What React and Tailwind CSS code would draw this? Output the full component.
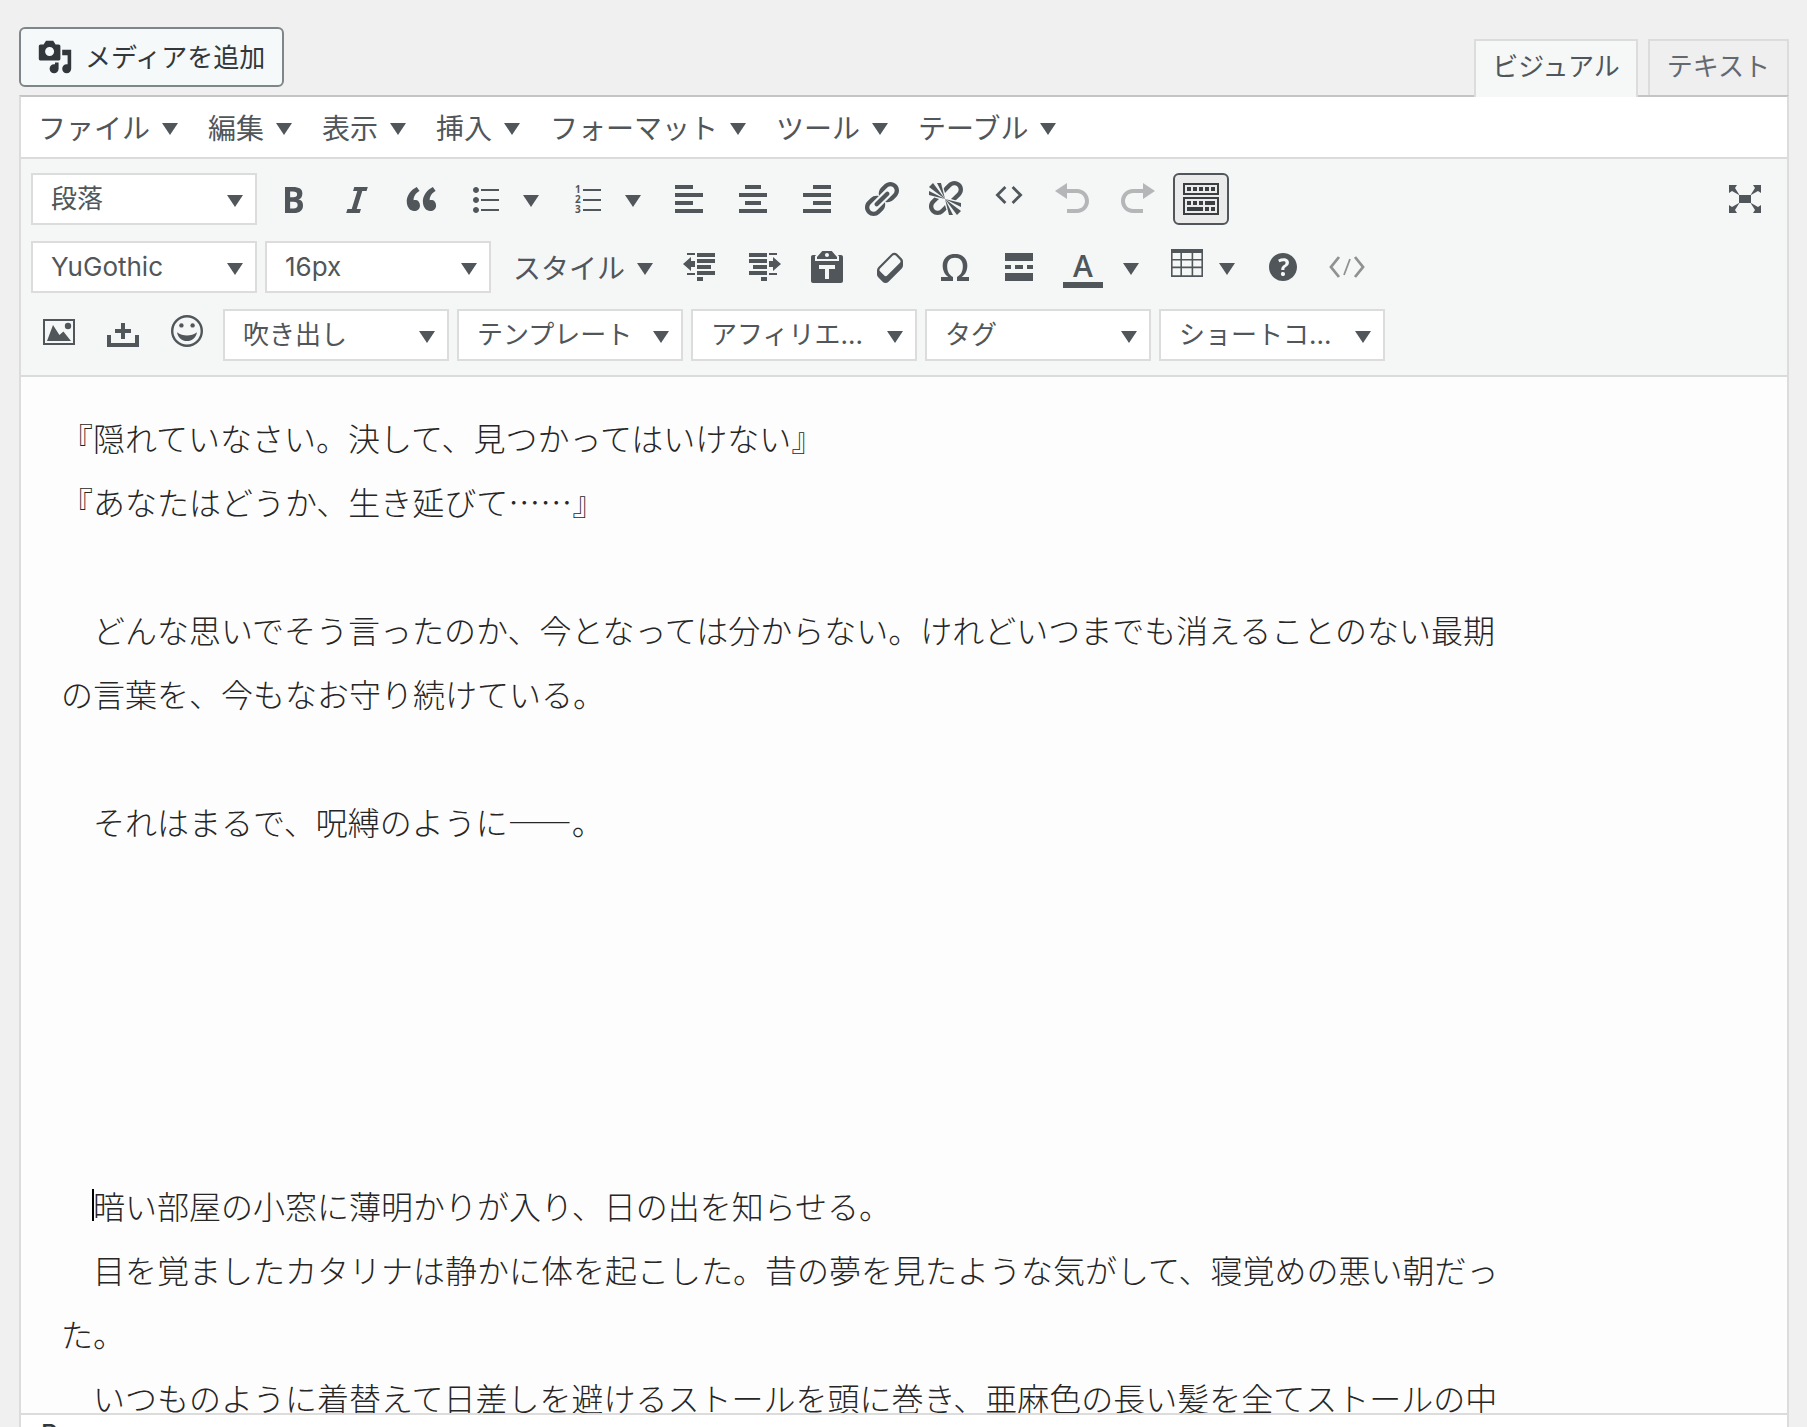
const dash = {
  media:
    "M13 11V4c0-.55-.45-1-1-1h-1.67L9 1H5L3.67 3H2c-.55 0-1 .45-1 1v7c0 .55.45 1 1 1h10c.55 0 1-.45 1-1zM7 4.5c1.38 0 2.5 1.12 2.5 2.5S8.38 9.5 7 9.5 4.5 8.38 4.5 7 5.62 4.5 7 4.5zM14 6h5v10.5c0 1.38-1.12 2.5-2.5 2.5S14 17.88 14 16.5s1.12-2.5 2.5-2.5c.17 0 .34.02.5.05V9h-3V6zm-4 8.05V13h2v3.5c0 1.38-1.12 2.5-2.5 2.5S7 17.88 7 16.5 8.12 14 9.5 14c.17 0 .34.02.5.05z",
  bold: "M6 4v13h4.54c1.37 0 2.46-.33 3.26-1 .8-.66 1.2-1.58 1.2-2.77 0-.84-.17-1.51-.51-2.01s-.9-.85-1.67-1.03v-.09c.57-.1 1.02-.4 1.36-.9s.51-1.13.51-1.91c0-1.14-.39-1.98-1.17-2.5C12.75 4.26 11.5 4 9.78 4H6zm2.57 5.15V6.26h1.36c.73 0 1.27.11 1.61.32.34.22.51.58.51 1.07 0 .54-.16.92-.47 1.15s-.82.35-1.51.35h-1.5zm0 2.19h1.6c1.44 0 2.16.53 2.16 1.61 0 .6-.17 1.05-.51 1.34s-.86.43-1.57.43H8.57v-3.38z",
  italic: "M14.78 6h-2.13l-2.8 9h2.12l-.62 2H4.6l.62-2h2.14l2.8-9H8.03l.62-2h6.75z",
  quote:
    "M9.49 13.22c0-.74-.2-1.38-.61-1.9-.62-.78-1.83-.88-2.53-.72-.29-1.65 1.11-3.75 2.92-4.65L7.88 4c-2.73 1.3-5.42 4.28-4.96 8.05C3.21 14.43 4.59 16 6.54 16c.85 0 1.56-.25 2.12-.75s.83-1.18.83-2.03zm8.05 0c0-.74-.2-1.38-.61-1.9-.63-.78-1.83-.88-2.53-.72-.29-1.65 1.11-3.75 2.92-4.65L15.93 4c-2.73 1.3-5.41 4.28-4.95 8.05.29 2.38 1.66 3.95 3.61 3.95.85 0 1.56-.25 2.12-.75s.83-1.18.83-2.03z",
  ul: "M5.5 7C4.67 7 4 6.33 4 5.5 4 4.68 4.67 4 5.5 4 6.32 4 7 4.68 7 5.5 7 6.33 6.32 7 5.5 7zM8 5h9v1H8V5zm-2.5 7c-.83 0-1.5-.67-1.5-1.5C4 9.68 4.67 9 5.5 9c.82 0 1.5.68 1.5 1.5 0 .83-.68 1.5-1.5 1.5zM8 10h9v1H8v-1zm-2.5 7c-.83 0-1.5-.67-1.5-1.5 0-.82.67-1.5 1.5-1.5.82 0 1.5.68 1.5 1.5 0 .83-.68 1.5-1.5 1.5zM8 15h9v1H8v-1z",
  left: "M12 5V3H3v2h9zm5 4V7H3v2h14zm-5 4v-2H3v2h9zm5 4v-2H3v2h14z",
  center: "M14 5V3H6v2h8zm3 4V7H3v2h14zm-3 4v-2H6v2h8zm3 4v-2H3v2h14z",
  right: "M17 5V3H8v2h9zm0 4V7H3v2h14zm0 4v-2H8v2h9zm0 4v-2H3v2h14z",
  link: "M17.74 2.76c1.68 1.69 1.68 4.41 0 6.1l-1.53 1.52c-1.12 1.12-2.7 1.47-4.14 1.09l2.62-2.61.76-.77.76-.76c.84-.84.84-2.2 0-3.04-.84-.85-2.2-.85-3.04 0l-.77.76-3.38 3.38c-.37-1.44-.02-3.02 1.1-4.14l1.52-1.53c1.69-1.68 4.42-1.68 6.1 0zM8.59 13.43l5.34-5.34c.42-.42.42-1.1 0-1.52-.44-.43-1.13-.39-1.53 0l-5.33 5.34c-.42.42-.42 1.1 0 1.52.44.43 1.13.39 1.52 0zm-.76 2.29l4.14-4.15c.38 1.44.03 3.02-1.09 4.14l-1.52 1.53c-1.69 1.68-4.41 1.68-6.1 0-1.68-1.68-1.68-4.42 0-6.1l1.53-1.52c1.12-1.12 2.7-1.47 4.14-1.1l-4.14 4.15c-.85.84-.85 2.2 0 3.05.84.84 2.2.84 3.04 0z",
  unlink:
    "M17.74 2.26c1.68 1.69 1.68 4.41 0 6.1l-1.53 1.52c-.32.33-.69.58-1.08.77L13 10l1.69-1.64.76-.77.76-.76c.84-.84.84-2.2 0-3.04-.84-.85-2.2-.85-3.04 0l-.77.76-.76.76L10 7l-.65-2.14c.19-.38.44-.75.77-1.07l1.52-1.53c1.69-1.68 4.42-1.68 6.1 0zM2 4l8 6-6-8zm4-2l4 8-2-8H6zM2 6l8 4-8-2V6zm7.36 7.69L10 13l.74 2.35-1.38 1.39c-1.69 1.68-4.41 1.68-6.1 0-1.68-1.68-1.68-4.42 0-6.1l1.39-1.38L7 10l-.69.64-1.52 1.53c-.85.84-.85 2.2 0 3.04.84.85 2.2.85 3.04 0zM18 16l-8-6 6 8zm-4 2l-4-8 2 8h2zm4-4l-8-4 8 2v2z",
  undo: "M12 5H7V2L1 6l6 4V7h5c2.2 0 4 1.8 4 4s-1.8 4-4 4H7v2h5c3.3 0 6-2.7 6-6s-2.7-6-6-6z",
  redo: "M8 5h5V2l6 4-6 4V7H8c-2.2 0-4 1.8-4 4s1.8 4 4 4h5v2H8c-3.3 0-6-2.7-6-6s2.7-6 6-6z",
  sink: "M19 2v6H1V2h18zm-1 5V3H2v4h16zM5 4v2H3V4h2zm3 0v2H6V4h2zm3 0v2H9V4h2zm3 0v2h-2V4h2zm3 0v2h-2V4h2zm2 5v9H1V9h18zm-1 8v-7H2v7h16zM5 11v2H3v-2h2zm3 0v2H6v-2h2zm3 0v2H9v-2h2zm6 0v2h-5v-2h5zm-6 3v2H3v-2h8zm3 0v2h-2v-2h2zm3 0v2h-2v-2h2z",
  outdent:
    "M4 3h4v1H4zM9 3h9v2H9zM9 6h9v2H9zM9 9h7v2H9zM9 12h9v2H9zM4 13h4v1H4zM9 15h3v2H9zM2 8.5L6 5v2h2v3H6v2z",
  indent:
    "M3 3h9v2H3zM13 3h4v1h-4zM3 6h9v2H3zM5 9h7v2H5zM3 12h9v2H3zM13 13h4v1h-4zM9 15h3v2H9zM19 8.5L15 5v2h-2v3h2v2z",
  paste:
    "M12.38 2L15 5v1H5V5l2.64-3h4.74zM10 5c.55 0 1-.44 1-1 0-.55-.45-1-1-1s-1 .45-1 1c0 .56.45 1 1 1zm5.45-1H17c.55 0 1 .45 1 1v12c0 .56-.45 1-1 1H3c-.55 0-1-.44-1-1V5c0-.55.45-1 1-1h1.55L4 4.63V7h12V4.63zM14 11V9H6v2h3v5h2v-5h3z",
  eraser:
    "M14.29 4.59l1.1 1.11c.41.4.61.94.61 1.47v2.12c0 .53-.2 1.07-.61 1.47l-6.63 6.63c-.4.41-.94.61-1.47.61s-1.07-.2-1.47-.61l-1.11-1.1-1.1-1.11c-.41-.4-.61-.94-.61-1.47v-2.12c0-.54.2-1.07.61-1.48l6.63-6.62c.4-.41.94-.61 1.47-.61s1.06.2 1.47.61zm-6.21 9.7l6.42-6.42c.39-.39.39-1.03 0-1.43L12.36 4.3c-.19-.19-.45-.29-.72-.29s-.52.1-.71.29l-6.42 6.42c-.39.4-.39 1.04 0 1.43l2.14 2.14c.38.38 1.04.38 1.43 0z",
  omega:
    "M10 5.4c1.27 0 2.24.36 2.91 1.08.66.71 1 1.76 1 3.13 0 1.28-.23 2.37-.69 3.27-.47.89-1.27 1.52-2.22 2.12v2h6v-2h-3.69c.92-.64 1.62-1.34 2.12-2.34.49-1.01.74-2.13.74-3.35 0-1.78-.55-3.19-1.65-4.22S11.92 3.54 10 3.54s-3.43.53-4.52 1.57c-1.1 1.04-1.65 2.44-1.65 4.2 0 1.21.24 2.31.73 3.33.48 1.01 1.19 1.71 2.1 2.36H3v2h6v-2c-.98-.64-1.8-1.28-2.24-2.17-.45-.89-.67-1.96-.67-3.22 0-1.37.33-2.41 1-3.13C7.75 5.76 8.72 5.4 10 5.4z",
  more: "M17 7V3H3v4h14zM6 11V9H3v2h3zm6 0V9H8v2h4zm5 0V9h-3v2h3zm0 6v-4H3v4h14z",
  help: "M17 10c0-3.87-3.14-7-7-7-3.87 0-7 3.13-7 7s3.13 7 7 7c3.86 0 7-3.13 7-7zm-6.3 1.48H9.14v-.43c0-.38.08-.7.24-.98s.46-.57.88-.89c.41-.29.68-.53.81-.71.14-.18.2-.39.2-.62 0-.25-.09-.44-.28-.58-.19-.13-.45-.19-.79-.19-.58 0-1.25.19-2 .57l-.64-1.28c.87-.49 1.8-.74 2.77-.74.81 0 1.45.2 1.92.58.48.39.71.91.71 1.55 0 .43-.09.8-.29 1.11-.19.32-.57.67-1.11 1.06-.38.28-.61.49-.71.63-.1.15-.15.34-.15.57v.35zm-1.47 2.74c-.18-.17-.27-.42-.27-.73 0-.33.08-.58.26-.75s.43-.25.77-.25c.32 0 .57.09.75.26s.27.42.27.74c0 .3-.09.55-.27.72-.18.18-.43.27-.75.27-.33 0-.58-.09-.76-.26z",
  full: "M7 8h6v4H7zM2 3h4L5 4.5 7.2 8H7L3.500 6 2 7zM18 3h-4l1 1.500L12.800 8h.2l3.500-2L18 7zM2 17h4l-1-1.500L7.200 12H7l-3.500 2L2 13zM18 17h-4l1-1.500-2.200-3.500h.2l3.500 2 1.500-1z",
};

function Icon({ d, className = "size-10", children }) {
  return (
    <svg viewBox="0 0 20 20" fill="currentColor" className={className} aria-hidden="true">
      {d && <path fillRule="evenodd" d={d} />}
      {children}
    </svg>
  );
}

function Caret() {
  return (
    <svg viewBox="0 0 16 12" fill="currentColor" className="w-4 h-3 shrink-0" aria-hidden="true">
      <path d="M0 0h16L8 12z" />
    </svg>
  );
}

function Btn({ label, d, children, className = "" }) {
  return (
    <button
      type="button"
      aria-label={label}
      className={`flex h-[52px] w-14 shrink-0 items-center justify-center ${className}`}
    >
      {children || <Icon d={d} />}
    </button>
  );
}

function Split({ label, children, className = "w-[94px] pr-3" }) {
  return (
    <div className={`flex h-[52px] shrink-0 items-center justify-between ${className}`}>
      <button type="button" aria-label={label} className="flex w-14 justify-center">
        {children}
      </button>
      <button type="button" aria-label={`${label}のオプション`} className="flex pt-1">
        <Caret />
      </button>
    </div>
  );
}

function ListBox({ label, value }) {
  return (
    <div className="relative h-[52px] w-[226px] shrink-0">
      <select
        aria-label={label}
        defaultValue={value}
        className="h-full w-full appearance-none border-2 border-[#dcdcdc] bg-white pl-[18px] pr-10 pb-0.5 text-[26px] text-[#50565a]"
      >
        <option>{value}</option>
      </select>
      <span className="pointer-events-none absolute top-[22px] right-3.5 text-[#50565a]">
        <Caret />
      </span>
    </div>
  );
}

const menus = ["ファイル", "編集", "表示", "挿入", "フォーマット", "ツール", "テーブル"];

const lines = [
  "『隠れていなさい。決して、見つかってはいけない』",
  "『あなたはどうか、生き延びて……』",
  "",
  "　どんな思いでそう言ったのか、今となっては分からない。けれどいつまでも消えることのない最期の言葉を、今もなお守り続けている。",
  "",
  "　それはまるで、呪縛のように――。",
  "",
  "",
  "",
  "",
  "",
  "　暗い部屋の小窓に薄明かりが入り、日の出を知らせる。",
  "　目を覚ましたカタリナは静かに体を起こした。昔の夢を見たような気がして、寝覚めの悪い朝だった。",
  "　いつものように着替えて日差しを避けるストールを頭に巻き、亜麻色の長い髪を全てストールの中",
];

export default function App() {
  return (
    <div
      lang="ja"
      className="flex h-screen flex-col overflow-hidden bg-[#f0f0f0] pl-[19px] pr-[18px] font-[Inter,'Noto_Sans_CJK_JP',sans-serif] text-[#50565a]"
    >
      <div className="flex shrink-0 items-end justify-between pt-[27px]">
        <button
          type="button"
          className="mb-2 flex h-[60px] items-center gap-3 rounded-md border-2 border-[#7f868a] bg-[#f6f9f9] pl-4 pr-[17px] text-[26px] text-[#32373c]"
        >
          <Icon d={dash.media} className="size-9" />
          メディアを追加
        </button>
        <div className="flex gap-2.5" role="tablist">
          <button
            type="button"
            role="tab"
            aria-selected="true"
            className="z-10 -mb-0.5 h-[58px] border-2 border-b-0 border-[#dcdcdc] bg-[#f6f8f8] px-4 pb-1.5 text-[26px]"
          >
            ビジュアル
          </button>
          <button
            type="button"
            role="tab"
            aria-selected="false"
            className="h-14 border-2 border-b-0 border-[#dcdcdc] bg-[#efefef] px-[17px] pb-1 text-[26px] text-[#646970]"
          >
            テキスト
          </button>
        </div>
      </div>

      <div className="flex min-h-0 flex-1 flex-col border-x-2 border-t-2 border-x-[#dcdcdc] border-t-[#c3c4c4] bg-white">
        {/* menu bar */}
        <div className="flex h-[62px] shrink-0 items-center border-b-2 border-[#dadcdc] pt-1 pl-[17px] text-[28px]">
          {menus.map((m) => (
            <button key={m} type="button" className="mr-[30px] flex items-center gap-3">
              {m}
              <Caret />
            </button>
          ))}
        </div>

        {/* toolbar */}
        <div className="flex shrink-0 flex-col gap-4 border-b-2 border-[#dadcdc] bg-[#f5f7f7] px-2.5 py-3.5">
          <div className="flex gap-2">
            <ListBox label="書式" value="段落" />
            <Btn label="太字" d={dash.bold} />
            <Btn label="イタリック" d={dash.italic} />
            <Btn label="引用" d={dash.quote} />
            <Split label="番号なしリスト">
              <Icon d={dash.ul} />
            </Split>
            <Split label="番号付きリスト">
              <Icon className="size-10 font-['Open_Sans',sans-serif]">
                <path d="M8 5h9v1H8zM8 10h9v1H8zM8 15h9v1H8z" />
                <text x="4" y="7.2" fontSize="5" fontWeight="700">1</text>
                <text x="4" y="12.2" fontSize="5" fontWeight="700">2</text>
                <text x="4" y="17.2" fontSize="5" fontWeight="700">3</text>
              </Icon>
            </Split>
            <Btn label="左寄せ" d={dash.left} />
            <Btn label="中央揃え" d={dash.center} />
            <Btn label="右寄せ" d={dash.right} />
            <Btn label="リンクの挿入" d={dash.link} />
            <Btn label="リンクの削除" d={dash.unlink} />
            <Btn label="コード">
              <Icon>
                <path d="M8.2 4L4.2 8l4 4M11.800 4l4 4-4 4" fill="none" stroke="currentColor" strokeWidth="1.4" />
              </Icon>
            </Btn>
            <Btn label="取り消し" d={dash.undo} className="text-[#b4b6b8]" />
            <Btn label="やり直し" d={dash.redo} className="text-[#b4b6b8]" />
            <Btn
              label="ツールバー切り替え"
              d={dash.sink}
              className="rounded-md border-2 border-[#50565a] bg-[#ebebeb] text-[#3c3f42]"
            />
            <Btn label="集中執筆モード" d={dash.full} className="ml-auto mr-1" />
          </div>

          <div className="flex gap-2">
            <ListBox label="フォント" value="YuGothic" />
            <ListBox label="フォントサイズ" value="16px" />
            <button
              type="button"
              className="flex h-[52px] w-[164px] shrink-0 items-center justify-between pt-1 pl-3.5 pr-2.5 text-[28px]"
            >
              スタイル
              <Caret />
            </button>
            <Btn label="インデントを減らす" d={dash.outdent} />
            <Btn label="インデントを増やす" d={dash.indent} />
            <Btn label="テキストとしてペースト" d={dash.paste} />
            <Btn label="書式設定をクリア" d={dash.eraser} />
            <Btn label="特殊文字" d={dash.omega} />
            <Btn label="続きを読む" d={dash.more} />
            <Split label="テキスト色" className="w-[96px] pr-3">
              <span className="flex w-10 flex-col items-center border-b-[6px] border-[#50565a] pt-1 font-['Open_Sans',sans-serif] text-[30px] leading-[32px] font-semibold">
                A
              </span>
            </Split>
            <Split label="テーブル" className="w-[88px] pr-3">
              <Icon>
                <path
                  fillRule="evenodd"
                  d="M2 1h16v14H2zM2.8 3v3h3.9V3zM7.5 3v3h4.8V3zM13.1 3v3h4.1V3zM2.8 6.8v3h3.9v-3zM7.5 6.8v3h4.8v-3zM13.1 6.8v3h4.1v-3zM2.8 10.6v3.5h3.9v-3.5zM7.5 10.6v3.5h4.8v-3.5zM13.1 10.6v3.5h4.1v-3.5z"
                />
              </Icon>
            </Split>
            <Btn label="ヘルプ" d={dash.help} />
            <Btn label="ソース" className="text-[#8f9193]">
              <Icon>
                <path d="M6 5L2 10l4 5M14 5l4 5-4 5" fill="none" stroke="currentColor" strokeWidth="1.4" />
                <path d="M11.5 6l-3 8" fill="none" stroke="currentColor" strokeWidth="0.9" />
              </Icon>
            </Btn>
          </div>

          <div className="flex gap-2">
            <Btn label="画像">
              <Icon>
                <path fillRule="evenodd" d="M2 2h16v13H2zM3 3v11h14V3z" />
                <path d="M4 13l3-8 3.2 5 2-1.8L16 13z" />
                <circle cx="14.5" cy="5.5" r="1.6" />
              </Icon>
            </Btn>
            <Btn label="アップロード">
              <Icon>
                <path d="M2 10h2v4h12v-4h2v6H2zM9 4h2v3h3v2h-3v3H9V9H6V7h3z" />
              </Icon>
            </Btn>
            <Btn label="絵文字">
              <Icon>
                <circle cx="10" cy="8" r="7.4" fill="none" stroke="currentColor" strokeWidth="1.2" />
                <circle cx="7.2" cy="5.2" r="1.1" />
                <circle cx="12.8" cy="5.2" r="1.1" />
                <path d="M5 8.6c3 2.2 7 2.2 10 0-.5 2.9-2.5 4.4-5 4.4S5.5 11.5 5 8.6z" />
              </Icon>
            </Btn>
            <ListBox label="吹き出し" value="吹き出し" />
            <ListBox label="テンプレート" value="テンプレート" />
            <ListBox label="アフィリエイト" value="アフィリエ..." />
            <ListBox label="タグ" value="タグ" />
            <ListBox label="ショートコード" value="ショートコ..." />
          </div>
        </div>

        {/* editing area */}
        <div
          role="textbox"
          aria-multiline="true"
          aria-label="本文"
          className="min-h-0 flex-1 overflow-hidden bg-[#fdfdfd] pt-7 pl-10 font-['Noto_Sans_CJK_JP',sans-serif] text-[32px] leading-[64px] font-light text-[#262626]"
        >
          <div className="max-w-[1440px]">
            {lines.map((line, i) => (
              <p key={i} className="relative min-h-16">
                {line}
                {i === 11 && <span className="absolute top-4 left-[31px] h-8 w-0.5 bg-black" />}
              </p>
            ))}
          </div>
        </div>

        {/* status bar */}
        <div className="h-3.5 shrink-0 overflow-hidden border-t-2 border-[#dcdcdc] pt-1.5 pl-5 text-[26px] leading-[26px] font-medium text-[#32373c]">
          P
        </div>
      </div>
    </div>
  );
}
